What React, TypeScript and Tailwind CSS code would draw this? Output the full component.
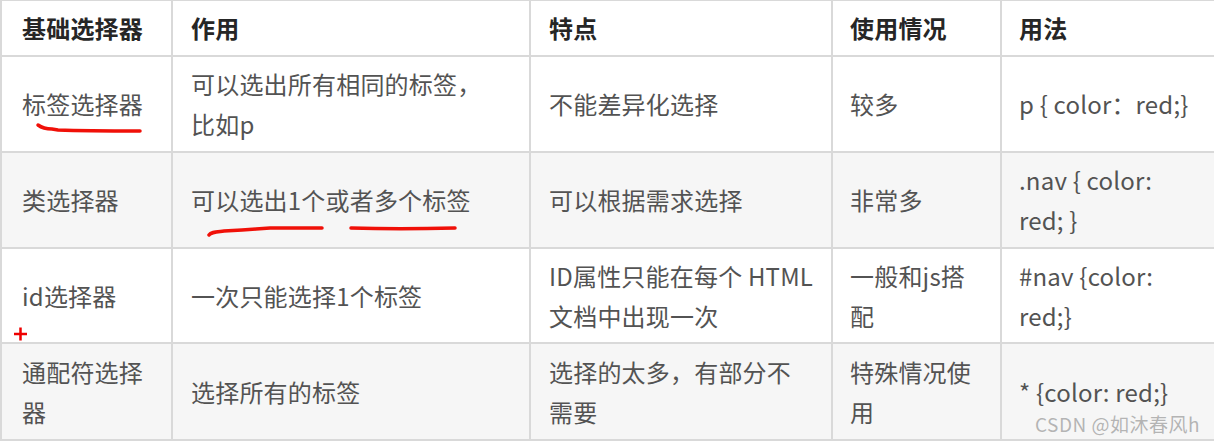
import React from "react";

type Cell = string | string[];

const header = ["基础选择器", "作用", "特点", "使用情况", "用法"];

const rows: { h: string; bg: string; cells: Cell[] }[] = [
  {
    h: "h-[96px]",
    bg: "bg-white",
    cells: [
      "标签选择器",
      ["可以选出所有相同的标签，", "比如p"],
      "不能差异化选择",
      "较多",
      "p { color：red;}",
    ],
  },
  {
    h: "h-[96px]",
    bg: "bg-[#f6f6f6]",
    cells: [
      "类选择器",
      "可以选出1个或者多个标签",
      "可以根据需求选择",
      "非常多",
      [".nav { color:", "red; }"],
    ],
  },
  {
    h: "h-[95px]",
    bg: "bg-white",
    cells: [
      "id选择器",
      "一次只能选择1个标签",
      ["ID属性只能在每个 HTML", "文档中出现一次"],
      ["一般和js搭", "配"],
      ["#nav {color:", "red;}"],
    ],
  },
  {
    h: "h-[97px]",
    bg: "bg-[#f6f6f6]",
    cells: [
      ["通配符选择", "器"],
      "选择所有的标签",
      ["选择的太多，有部分不", "需要"],
      ["特殊情况使", "用"],
      "* {color: red;}",
    ],
  },
];

const padFor = (i: number) => (i === 0 ? "pl-5" : i >= 3 ? "pl-[17px]" : "pl-[18px]");

function renderCell(c: Cell) {
  if (Array.isArray(c)) {
    return (
      <div>
        {c.map((l, k) => (
          <div key={k}>{l}</div>
        ))}
      </div>
    );
  }
  return <div>{c}</div>;
}

export default function App() {
  return (
    <div
      className="relative w-[1214px] h-[441px] overflow-hidden bg-white"
      style={{ fontFamily: '"Noto Sans CJK SC", "Microsoft YaHei", sans-serif' }}
    >
      <div className="grid grid-cols-[171px_358px_302px_169px_1fr] border-l-2 border-t border-[#d9d9d9] text-[24px] leading-[40px] whitespace-nowrap tracking-[0.2px]">
        {header.map((t, i) => (
          <div
            key={t}
            className={`h-[56px] flex items-center bg-white font-bold text-[#262626] border-b-2 border-[#d9d9d9] ${
              i < 4 ? "border-r-2" : ""
            } ${padFor(i)}`}
          >
            {t}
          </div>
        ))}
        {rows.map((r, ri) =>
          r.cells.map((c, i) => (
            <div
              key={`${ri}-${i}`}
              className={`${r.h} ${r.bg} flex items-center text-[#535353] border-b-2 border-[#d9d9d9] ${
                i < 4 ? "border-r-2" : ""
              } ${padFor(i)}`}
            >
              {renderCell(c)}
            </div>
          ))
        )}
      </div>

      <svg
        className="absolute left-0 top-0 pointer-events-none"
        width="1214"
        height="441"
        viewBox="0 0 1214 441"
        fill="none"
      >
        <path
          d="M38 125 C42 128 46 129 52 129 L58 130 C85 131 115 131 140 131"
          stroke="#f01008"
          strokeWidth="3.5"
          strokeLinecap="round"
        />
        <path
          d="M209 235 C211 232 216 232 224 231 L242 230 L256 229 L270 228 C290 228 305 228 322 228"
          stroke="#f01008"
          strokeWidth="3.5"
          strokeLinecap="round"
        />
        <path
          d="M351 228 C380 229 420 229 455 228"
          stroke="#f01008"
          strokeWidth="3.5"
          strokeLinecap="round"
        />
        <path d="M14 334 H27 M20.5 327.5 V340.5" stroke="#ee0000" strokeWidth="2.5" />
      </svg>

      <div className="absolute right-[14px] bottom-[8px] text-[19px] leading-none text-[#b4b4b4] tracking-[0.5px] [text-shadow:0_0_1px_#ffffff]">
        CSDN @如沐春风h
      </div>
    </div>
  );
}
